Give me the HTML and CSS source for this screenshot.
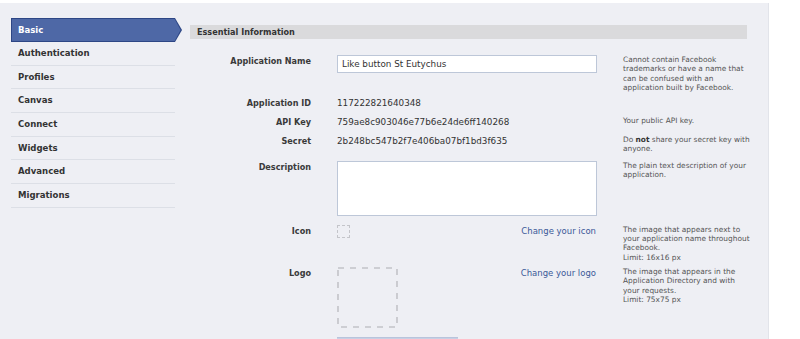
FILE: index.html
```html
<!DOCTYPE html>
<html lang="en">
  <head>
    <meta charset="UTF-8" />
    <title>Edit Application</title>
    <link rel="stylesheet" href="styles.css">
  </head>
  <body>
    <div class="panel">
      <ul class="side-nav">
        <li class="active"><span>Basic</span></li>
        <li>Authentication</li>
        <li>Profiles</li>
        <li>Canvas</li>
        <li>Connect</li>
        <li>Widgets</li>
        <li>Advanced</li>
        <li>Migrations</li>
      </ul>

      <div class="main">
        <h2 class="section-title">Essential Information</h2>

        <div class="row row-name">
          <label>Application Name</label>
          <div class="value"><input type="text" value="Like button St Eutychus" /></div>
          <p class="help">Cannot contain Facebook<br>trademarks or have a name that<br>can be confused with an<br>application built by Facebook.</p>
        </div>

        <div class="row row-id">
          <label>Application ID</label>
          <div class="value">117222821640348</div>
          <p class="help"></p>
        </div>

        <div class="row row-key">
          <label>API Key</label>
          <div class="value">759ae8c903046e77b6e24de6ff140268</div>
          <p class="help">Your public API key.</p>
        </div>

        <div class="row row-secret">
          <label>Secret</label>
          <div class="value">2b248bc547b2f7e406ba07bf1bd3f635</div>
          <p class="help">Do <b>not</b> share your secret key with<br>anyone.</p>
        </div>

        <div class="row row-desc">
          <label>Description</label>
          <div class="value"><textarea></textarea></div>
          <p class="help">The plain text description of your<br>application.</p>
        </div>

        <div class="row row-icon">
          <label>Icon</label>
          <div class="value split">
            <span class="icon-box"></span>
            <a href="#">Change your icon</a>
          </div>
          <p class="help">The image that appears next to<br>your application name throughout<br>Facebook.<br>Limit: 16x16 px</p>
        </div>

        <div class="row row-logo">
          <label>Logo</label>
          <div class="value split">
            <svg class="logo-box" width="61" height="61" viewBox="0 0 61 61">
              <rect x="1" y="1" width="59" height="59" fill="none" stroke="#c2c3c8" stroke-width="1.6" stroke-dasharray="6 6"></rect>
            </svg>
            <a href="#">Change your logo</a>
          </div>
          <p class="help">The image that appears in the<br>Application Directory and with<br>your requests.<br>Limit: 75x75 px</p>
        </div>

        <div class="row">
          <span></span>
          <div class="value"><div class="save-button"></div></div>
        </div>
      </div>
    </div>
  </body>
</html>
```

FILE: styles.css
```css
body {
  margin: 0;
  background: #fff;
  font-family: "DejaVu Sans", sans-serif;
  color: #333;
  overflow: hidden;
}

.panel {
  display: flex;
  width: 768px;
  height: 340px;
  margin-top: 3px;
  background-color: #eeeff4;
  border-right: 1px solid #e2e4ea;
}

/* left navigation */
.side-nav {
  list-style: none;
  margin: 0;
  padding: 15px 0 0 11px;
  width: 179px;
}

.side-nav li {
  width: 157px;
  height: 22.7px;
  padding-left: 7px;
  line-height: 22.7px;
  font-family: "DejaVu Sans Condensed", "DejaVu Sans", sans-serif;
  font-stretch: condensed;
  font-weight: bold;
  font-size: 9.5px;
  color: #333;
  border-bottom: 1px solid #dcdfe6;
}

.side-nav li.active {
  position: relative;
  width: 164px;
  height: 24px;
  padding: 0;
  line-height: 24px;
  border-bottom: none;
  color: #fff;
}

.side-nav li.active::before,
.side-nav li.active::after {
  content: "";
  position: absolute;
  top: 0;
  left: 0;
  width: 171px;
  height: 24px;
  background: #2d4685;
  clip-path: polygon(0 0, 164px 0, 171px 12px, 164px 24px, 0 24px);
}

.side-nav li.active::after {
  background: #4e68a6;
  clip-path: polygon(1px 1px, 163.6px 1px, 169.6px 12px, 163.6px 23px, 1px 23px);
}

.side-nav li.active span {
  position: relative;
  z-index: 1;
  padding-left: 7px;
}

/* form area */
.main {
  padding-top: 22px;
  width: 557px;
}

.section-title {
  margin: 0 0 16px;
  height: 14px;
  padding-left: 7px;
  line-height: 14px;
  background-color: #dadadc;
  font-family: "DejaVu Sans Condensed", "DejaVu Sans", sans-serif;
  font-stretch: condensed;
  font-size: 9px;
  font-weight: bold;
  color: #333;
}

.row {
  display: grid;
  grid-template-columns: 121px 260px 124px;
  column-gap: 26px;
  align-items: start;
}

.row label {
  text-align: right;
  line-height: 12px;
  font-family: "DejaVu Sans Condensed", "DejaVu Sans", sans-serif;
  font-stretch: condensed;
  font-size: 9px;
  font-weight: bold;
  color: #3a3a3a;
}

.value {
  line-height: 12px;
  font-size: 8.8px;
  color: #333;
}

.value.split {
  display: flex;
  justify-content: space-between;
  align-items: flex-start;
}

.help {
  margin: 0;
  font-size: 7.4px;
  line-height: 9.3px;
  color: #555;
  white-space: nowrap;
}

.help b {
  color: #333;
}

.row-name { margin-bottom: 5px; }
.row-id { margin-bottom: 7px; }
.row-key { margin-bottom: 7px; }
.row-secret { margin-bottom: 7px; }
.row-desc { margin-bottom: 9px; }
.row-icon { margin-bottom: 5px; }
.row-logo { margin-bottom: 9px; }

input,
textarea {
  box-sizing: border-box;
  display: block;
  width: 260px;
  margin: 0;
  border: 1px solid #bdc7d8;
  background: #fff;
  font-family: "DejaVu Sans", sans-serif;
  font-size: 8.8px;
  color: #333;
}

input {
  height: 18px;
  padding: 0 4px;
}

textarea {
  height: 55px;
  resize: none;
}

.icon-box {
  display: block;
  width: 11px;
  height: 11px;
  border: 1px dashed #c4c5ca;
}

.logo-box {
  display: block;
}

.value a {
  color: #3b5998;
  text-decoration: none;
  font-size: 8.5px;
  line-height: 12px;
  margin-right: 1px;
}

.save-button {
  width: 121px;
  height: 14px;
  background: #c7d0e4;
  border-top: 1px solid #b9c4dc;
}
```
